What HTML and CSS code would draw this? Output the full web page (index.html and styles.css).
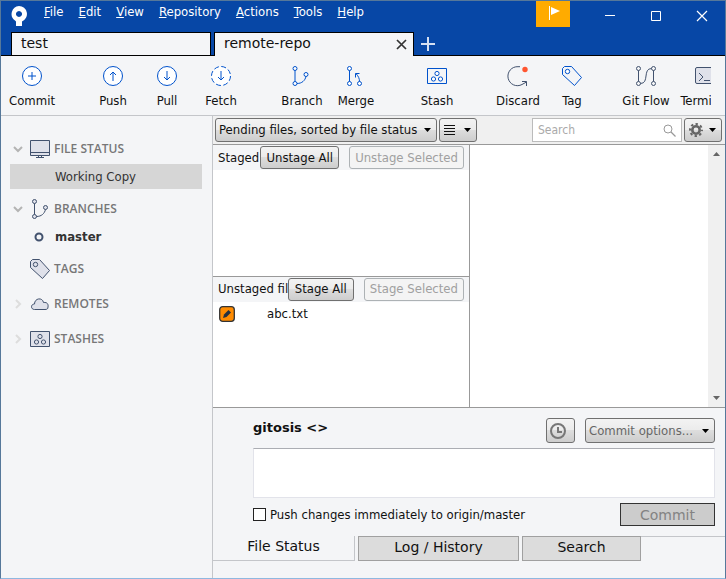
FILE: index.html
```html
<!DOCTYPE html>
<html lang="en">

<head>
    <meta charset="UTF-8">
    <title>Sourcetree</title>
    <link rel="stylesheet" href="styles.css">
</head>

<body>
<div class="window">
    <header class="titlebar">
        <div class="titlebar-top">
            <svg class="logo" width="18" height="20" viewBox="0 0 18 20">
                <path d="M9 0a8 8 0 0 1 3 15.400V20H6v-4.500l-1-1A8 8 0 0 1 9 0zM9 5a3 3 0 1 0 .010 0z" fill="#fff" fill-rule="evenodd"/>
            </svg>
            <nav class="menu">
                <a href="#"><u>F</u>ile</a>
                <a href="#"><u>E</u>dit</a>
                <a href="#"><u>V</u>iew</a>
                <a href="#"><u>R</u>epository</a>
                <a href="#"><u>A</u>ctions</a>
                <a href="#"><u>T</u>ools</a>
                <a href="#"><u>H</u>elp</a>
            </nav>
            <button class="flag" aria-label="Notifications">
                <svg width="34" height="26" viewBox="0 0 34 26">
                    <path d="M13.500 5v14" stroke="#fff"/>
                    <path d="M15 6l9 4-9 4z" fill="#fff"/>
                </svg>
            </button>
            <div class="window-buttons">
                <button aria-label="Minimize">
                    <svg width="12" height="12" viewBox="0 0 12 12"><path d="M1 5.500h10" stroke="#fff"/></svg>
                </button>
                <button aria-label="Maximize">
                    <svg width="12" height="12" viewBox="0 0 12 12"><path d="M1.500 1.500h9v9h-9z" fill="none" stroke="#fff"/></svg>
                </button>
                <button aria-label="Close">
                    <svg width="12" height="12" viewBox="0 0 12 12"><path d="M1 1l10 10M11 1L1 11" stroke="#fff" stroke-width="1.200"/></svg>
                </button>
            </div>
        </div>
        <div class="repo-tabs">
            <div class="repo-tab"><a href="#">test</a></div>
            <div class="repo-tab active">
                <a href="#">remote-repo</a>
                <button aria-label="Close tab">
                    <svg width="11" height="11" viewBox="0 0 11 11"><path d="M1 1l9 9M10 1L1 10" stroke="#333" stroke-width="1.700"/></svg>
                </button>
            </div>
            <button class="new-tab" aria-label="New tab">
                <svg width="14" height="14" viewBox="0 0 14 14"><path d="M7 0v14M0 7h14" stroke="#d5e0f2" stroke-width="2"/></svg>
            </button>
        </div>
    </header>

    <div class="toolbar">
        <div class="tool-group">
            <button class="tool">
                <svg viewBox="0 0 22 22"><circle cx="11" cy="11" r="9.500"/><path d="M11 7v8M7 11h8"/></svg>
                Commit
            </button>
        </div>
        <div class="tool-group">
            <button class="tool">
                <svg viewBox="0 0 22 22"><circle cx="11" cy="11" r="9.500"/><path d="M11 16V7M8 10l3-3 3 3"/></svg>
                Push
            </button>
            <button class="tool">
                <svg viewBox="0 0 22 22"><circle cx="11" cy="11" r="9.500"/><path d="M11 6v9M8 12l3 3 3-3"/></svg>
                Pull
            </button>
            <button class="tool">
                <svg viewBox="0 0 22 22"><circle cx="11" cy="11" r="9.500" stroke-dasharray="5 2.460"/><path d="M11 6v9M8 12l3 3 3-3"/></svg>
                Fetch
            </button>
        </div>
        <div class="tool-group">
            <button class="tool">
                <svg viewBox="0 0 22 22"><circle cx="4" cy="3.500" r="2"/><circle cx="4" cy="18.500" r="2"/><circle cx="15" cy="9.500" r="2"/><path d="M4 5.500v11M6 18.500c5 0 8-3 9-7"/></svg>
                Branch
            </button>
            <button class="tool">
                <svg viewBox="0 0 22 22"><circle cx="4.500" cy="3.500" r="2"/><circle cx="4.500" cy="18.500" r="2"/><circle cx="14.500" cy="18.500" r="2"/><path d="M4.500 5.500v11M14.500 16.500c0-3-1-5-3.500-8M10.500 12.500v-4h4"/></svg>
                Merge
            </button>
        </div>
        <div class="tool-group">
            <button class="tool">
                <svg viewBox="0 0 22 22"><path d="M1.500 3.500h19v15h-19z"/><circle cx="11" cy="8.500" r="2.100"/><circle cx="7.500" cy="14" r="2.100"/><circle cx="14.500" cy="14" r="2.100"/></svg>
                Stash
            </button>
        </div>
        <div class="tool-group">
            <button class="tool gray">
                <svg viewBox="0 0 22 22"><path d="M13 1.700H11A9.500 9.500 0 1 0 15 19.500L19.500 17M15 16.500h4.500v4.500"/><circle class="dot" cx="18" cy="4.500" r="2.700"/></svg>
                Discard
            </button>
            <button class="tool">
                <svg viewBox="0 0 22 22"><path d="M1.500 3.500l2-2h7l10 11-7 8-12-11z"/><circle cx="6.500" cy="6.500" r="2.200"/></svg>
                Tag
            </button>
        </div>
        <div class="tool-group flow">
            <button class="tool gray">
                <svg viewBox="0 0 22 22"><circle cx="3.500" cy="3.500" r="2"/><circle cx="3.500" cy="18.500" r="2"/><circle cx="18.500" cy="3.500" r="2"/><circle cx="18.500" cy="18.500" r="2"/><path d="M3.500 5.500v11M18.500 5.500v11M5.500 18.500c9 0 2-15 11-15"/></svg>
                Git Flow
            </button>
            <button class="tool gray">
                <svg viewBox="0 0 22 22"><rect class="shade" x="1.500" y="2.500" width="19" height="16" rx="1.500"/><path d="M5 8l4 4-4 4M10 15.500h6"/></svg>
                Terminal
            </button>
        </div>
    </div>

    <div class="workspace">
        <aside class="sidebar">
            <div class="section">
                <svg class="chevron" viewBox="0 0 10 10"><path d="M1 3l4 4 4-4"/></svg>
                <svg class="icon" viewBox="0 0 20 20"><path d="M.500 1.500h19v15H.500zM.500 13.500h19M6 18.500h8M8.500 17v1M11.500 17v1"/></svg>
                <span>FILE STATUS</span>
            </div>
            <a class="entry selected" href="#">Working Copy</a>
            <div class="section branches">
                <svg class="chevron" viewBox="0 0 10 10"><path d="M1 3l4 4 4-4"/></svg>
                <svg class="icon" viewBox="0 0 20 20"><circle cx="4.500" cy="2.500" r="2"/><circle cx="4.500" cy="17.500" r="2"/><circle cx="15.500" cy="8.500" r="2"/><path fill="none" d="M4.500 4.500v11M6.500 17.500c5 0 8-3 9-7"/></svg>
                <span>BRANCHES</span>
            </div>
            <a class="entry branch" href="#">
                <svg width="10" height="10" viewBox="0 0 10 10"><circle cx="5" cy="5" r="3.500" fill="none" stroke="#42526e" stroke-width="2"/></svg>
                master
            </a>
            <div class="section">
                <svg class="chevron hidden" viewBox="0 0 10 10"><path d="M3 1l4 4-4 4"/></svg>
                <svg class="icon" viewBox="0 0 20 20"><path d="M.500 2.500l2-2h7l10 11-7 8-12-11z"/><circle cx="5.500" cy="5.500" r="2.200"/></svg>
                <span>TAGS</span>
            </div>
            <div class="section">
                <svg class="chevron faint" viewBox="0 0 10 10"><path d="M3 1l4 4-4 4"/></svg>
                <svg class="icon" viewBox="0 0 20 20"><path d="M4.500 15.500c-4 0-4-5.500 0-5.500 0-6 8-7 9-1.500 4-.500 5 2 4.500 4.500 0 2-1 2.500-3 2.500z"/></svg>
                <span>REMOTES</span>
            </div>
            <div class="section">
                <svg class="chevron faint" viewBox="0 0 10 10"><path d="M3 1l4 4-4 4"/></svg>
                <svg class="icon" viewBox="0 0 20 20"><path d="M.500 2.500h19v15H.500z"/><circle cx="10" cy="7.500" r="2.100"/><circle cx="6.500" cy="13" r="2.100"/><circle cx="13.500" cy="13" r="2.100"/></svg>
                <span>STASHES</span>
            </div>
        </aside>

        <main class="content">
            <div class="filter-bar">
                <select class="control sort" aria-label="Sort files">
                    <option>Pending files, sorted by file status</option>
                </select>
                <button class="control view" aria-label="View mode">
                    <svg width="11" height="11" viewBox="0 0 11 11"><path d="M0 .500h11M0 3.500h11M0 6.500h11M0 9.500h11" stroke="#111"/></svg>
                    <svg width="7" height="4" viewBox="0 0 7 4"><path d="M0 0h7L3.500 4z"/></svg>
                </button>
                <div class="search">
                    <input type="text" placeholder="Search" aria-label="Search">
                    <svg width="13" height="13" viewBox="0 0 13 13"><circle cx="5" cy="5" r="4" fill="none" stroke="#999"/><path d="M8 8l4.500 4.500" stroke="#999" stroke-width="1.300"/></svg>
                </div>
                <button class="control settings" aria-label="Settings">
                    <svg width="14" height="14" viewBox="0 0 14 14"><circle cx="7" cy="7" r="3.700" fill="none" stroke="#666" stroke-width="2.600"/><circle cx="7" cy="7" r="6" fill="none" stroke="#666" stroke-width="2" stroke-dasharray="2.400 2.312" stroke-dashoffset="1.200"/></svg>
                    <svg width="7" height="4" viewBox="0 0 7 4"><path d="M0 0h7L3.500 4z"/></svg>
                </button>
            </div>

            <div class="files">
                <div class="lists">
                    <section class="list">
                        <div class="list-header">
                            <span>Staged files</span>
                            <button class="control">Unstage All</button>
                            <button class="control" disabled>Unstage Selected</button>
                        </div>
                    </section>
                    <section class="list">
                        <div class="list-header">
                            <span>Unstaged files</span>
                            <button class="control">Stage All</button>
                            <button class="control" disabled>Stage Selected</button>
                        </div>
                        <div class="file">
                            <svg width="16" height="16" viewBox="0 0 16 16"><rect x=".700" y=".700" width="14.600" height="14.600" rx="3" fill="#ff8b00" stroke="#333" stroke-width="1.300"/><path d="M4 12l1-3.500L9.500 4 12 6.500 7.500 11z" fill="#253040"/></svg>
                            <span>abc.txt</span>
                        </div>
                    </section>
                </div>
                <div class="diff">
                    <div class="scrollbar">
                        <svg width="7" height="4" viewBox="0 0 7 4"><path d="M0 4h7L3.500 0z"/></svg>
                        <svg width="7" height="4" viewBox="0 0 7 4"><path d="M0 0h7L3.500 4z"/></svg>
                    </div>
                </div>
            </div>

            <form class="commit">
                <div class="commit-row">
                    <strong>gitosis &lt;&gt;</strong>
                    <button type="button" class="control history" aria-label="Previous messages">
                        <svg width="16" height="16" viewBox="0 0 16 16"><circle cx="8" cy="8" r="7" fill="none" stroke="#777" stroke-width="2"/><path d="M8 4v5h4" fill="none" stroke="#777" stroke-width="2"/></svg>
                    </button>
                    <select class="control options" aria-label="Commit options">
                        <option>Commit options...</option>
                    </select>
                </div>
                <textarea aria-label="Commit message"></textarea>
                <div class="commit-row">
                    <label class="push"><input type="checkbox"> Push changes immediately to origin/master</label>
                    <button class="submit" disabled>Commit</button>
                </div>
            </form>
            <nav class="view-tabs">
                <a class="active" href="#">File Status</a>
                <a class="log" href="#">Log / History</a>
                <a class="find" href="#">Search</a>
                <div class="rest"></div>
            </nav>
        </main>
    </div>
</div>
</body>

</html>
```
FILE: styles.css
```css
* {
    box-sizing: border-box;
}

body {
    margin: 0;
    font-family: "DejaVu Sans Condensed", "Noto Sans", sans-serif;
    font-size: 13px;
    line-height: 16px;
    color: #111;
}

a {
    color: inherit;
    text-decoration: none;
}

button, input, select, textarea {
    font: inherit;
    color: inherit;
}

button {
    padding: 0;
    border: none;
    background: none;
}

svg {
    display: block;
    flex: none;
}

.window {
    display: flex;
    flex-direction: column;
    height: 100vh;
    min-height: 560px;
    border: 1px solid #56789a;
    border-bottom-color: #8fb8e0;
    background-color: #f4f5f7;
    overflow: hidden;
}

/* title bar */
.titlebar {
    background-color: #0747a6;
}

.titlebar-top {
    display: flex;
    align-items: flex-start;
    height: 31px;
    padding-left: 9px;
}

.logo {
    margin-top: 5px;
}

.menu {
    display: flex;
    gap: 15px;
    margin-top: 3px;
    margin-left: 16px;
    color: #fff;
}

.flag {
    margin-left: auto;
    background-color: #ffab00;
}

.window-buttons {
    display: flex;
    margin-left: 17px;
}

.window-buttons button {
    display: flex;
    justify-content: center;
    width: 46px;
    padding-top: 9px;
}

.repo-tabs {
    display: flex;
    gap: 3px;
    height: 24px;
    padding-left: 10px;
    border-bottom: 1px solid #000;
}

.repo-tab {
    display: flex;
    align-items: flex-start;
    justify-content: space-between;
    width: 200px;
    height: 23px;
    padding: 2px 6px 0 9px;
    border: 1px solid #000;
    border-bottom: none;
    background-color: #f4f5f7;
    font-family: "DejaVu Sans", sans-serif;
    font-size: 14px;
}

.repo-tab.active {
    height: 24px;
}

.repo-tab button {
    padding-top: 4px;
}

.new-tab {
    padding: 0 4px;
}

/* toolbar */
.toolbar {
    display: flex;
    flex: none;
    gap: 27px;
    height: 59px;
    margin-right: 14px;
    padding: 9px 0 0 4px;
    overflow: hidden;
}

.tool-group {
    display: flex;
    flex: none;
}

.tool-group.flow {
    gap: 5px;
    margin-left: -7px;
}

.tool {
    display: flex;
    flex-direction: column;
    align-items: center;
    gap: 6px;
    width: 54px;
    white-space: nowrap;
}

.tool svg {
    width: 22px;
    height: 22px;
    fill: #fff;
    stroke: #0052cc;
}

.tool path {
    fill: none;
}

.tool.gray svg {
    fill: none;
    stroke: #42526e;
}

.tool .dot {
    fill: #ff5630;
    stroke: none;
}

.tool .shade {
    fill: #dfe1ea;
}

/* sidebar */
.workspace {
    display: flex;
    flex: 1;
    min-height: 0;
    border-top: 1px solid #c4c6ca;
}

.sidebar {
    flex: none;
    width: 211px;
    padding: 20px 10px 0 9px;
    color: #777;
}

.section {
    display: flex;
    align-items: center;
    height: 25px;
    margin-bottom: 10px;
    padding-left: 3px;
    font-family: "Open Sans", sans-serif;
    font-size: 12px;
    font-weight: 600;
}

.section:first-child {
    margin-bottom: 3px;
}

.branches {
    margin: 7px 0 3px;
}

.chevron {
    width: 10px;
    height: 10px;
    margin-right: 7px;
    fill: none;
    stroke: #b4b4b4;
    stroke-width: 2;
}

.chevron.faint {
    stroke: #ddd;
}

.chevron.hidden {
    visibility: hidden;
}

.icon {
    width: 20px;
    height: 20px;
    margin-right: 4px;
    fill: #dfe1ea;
    stroke: #42526e;
}

.entry {
    display: flex;
    align-items: center;
    height: 25px;
    padding-left: 45px;
    color: #333;
}

.entry.selected {
    background-color: #d6d6d6;
}

.entry.branch {
    gap: 11px;
    margin-bottom: 7px;
    padding-left: 24px;
    font-weight: bold;
}

/* content */
.content {
    display: flex;
    flex-direction: column;
    flex: 1;
    min-width: 0;
    border-left: 1px solid #c4c6ca;
}

.control {
    height: 23px;
    padding: 0 6px;
    border: 1px solid #707070;
    border-radius: 3px;
    background: linear-gradient(#f3f3f3, #ebebeb 50%, #ddd 50%, #cdcdcd);
    white-space: nowrap;
}

.control:disabled {
    border-color: #adb2b5;
    background: #f4f4f4;
    color: #a0a0a0;
}

select.control {
    appearance: none;
    padding: 0 3px;
    background: url("data:image/svg+xml,%3Csvg xmlns='http://www.w3.org/2000/svg' width='7' height='4'%3E%3Cpath d='M0 0h7L3.500 4z'/%3E%3C/svg%3E") no-repeat right 5px center, linear-gradient(#f3f3f3, #ebebeb 50%, #ddd 50%, #cdcdcd);
}

.filter-bar {
    display: flex;
    align-items: center;
    gap: 2px;
    height: 29px;
    padding: 0 3px 0 2px;
    border-bottom: 1px solid #999;
    background-color: #f0f0f0;
}

.filter-bar .control {
    height: 24px;
}

.sort {
    width: 222px;
}

.view, .settings {
    display: flex;
    align-items: center;
    justify-content: space-between;
    width: 38px;
    padding: 0 5px 0 4px;
}

.search {
    display: flex;
    align-items: center;
    width: 150px;
    height: 24px;
    margin-left: auto;
    padding: 0 5px;
    border: 1px solid #bbb;
    background-color: #fff;
}

.search input {
    flex: 1;
    min-width: 0;
    padding: 0;
    border: none;
    font-size: 12px;
}

.search input::placeholder {
    color: #aaa;
}

.files {
    display: flex;
    flex: 1;
    min-height: 0;
    border-bottom: 1px solid #999;
    background-color: #fff;
}

.lists {
    display: flex;
    flex: none;
    flex-direction: column;
    width: calc(50% + 1px);
    border-right: 1px solid #999;
}

.list {
    flex: 1;
    min-height: 0;
}

.list + .list {
    border-top: 1px solid #999;
}

.list-header {
    display: flex;
    align-items: center;
    height: 25px;
    padding: 0 5px;
    background-color: #f4f5f7;
}

.list-header span {
    flex: 1;
    min-width: 0;
    overflow: hidden;
    white-space: nowrap;
}

.list-header .control {
    flex: none;
    min-width: 66px;
    padding: 0 5px;
}

.list-header .control + .control {
    margin-left: 10px;
}

.file {
    display: flex;
    align-items: center;
    gap: 32px;
    height: 24px;
    padding-left: 6px;
}

.diff {
    display: flex;
    justify-content: flex-end;
    flex: 1;
}

.scrollbar {
    display: flex;
    flex-direction: column;
    align-items: center;
    justify-content: space-between;
    width: 17px;
    padding: 7px 0;
    background-color: #f0f0f0;
    fill: #666;
}

/* commit form */
.commit {
    display: flex;
    flex-direction: column;
    padding: 10px 10px 10px 40px;
}

.commit-row {
    display: flex;
    align-items: center;
    gap: 10px;
}

.commit strong {
    flex: 1;
    padding-bottom: 5px;
    font-family: "DejaVu Sans", sans-serif;
}

.commit .control {
    height: 25px;
    color: #666;
}

.history {
    width: 29px;
    padding-left: 3px;
}

.options {
    width: 130px;
}

.commit textarea {
    height: 50px;
    margin: 5px 0;
    border: 1px solid #e2e3ea;
    border-top-color: #abadb3;
    background-color: #fff;
    resize: none;
}

.push {
    display: flex;
    align-items: center;
    gap: 4px;
    flex: 1;
}

.push input {
    appearance: none;
    width: 13px;
    height: 13px;
    margin: 0;
    border: 1px solid #222;
    background-color: #fff;
}

.submit {
    width: 95px;
    height: 23px;
    border: 1px solid #333;
    background-color: #ccc;
    color: #838383;
    font-family: "DejaVu Sans", sans-serif;
    font-size: 14px;
}

/* bottom tabs */
.view-tabs {
    display: flex;
    height: 42px;
    padding-bottom: 17px;
    font-family: "DejaVu Sans", sans-serif;
    font-size: 14px;
    text-align: center;
}

.view-tabs a {
    padding-top: 2px;
    border: 1px solid #a0a0a0;
    background-color: #dcdcdc;
}

.view-tabs .active {
    width: 142px;
    margin-right: 3px;
    border-color: #c4c6ca;
    border-top: none;
    border-left: none;
    background-color: transparent;
}

.view-tabs .log {
    width: 161px;
}

.view-tabs .find {
    width: 119px;
    margin-left: 3px;
}

.view-tabs .rest {
    flex: 1;
    border-top: 1px solid #c4c6ca;
}
```
